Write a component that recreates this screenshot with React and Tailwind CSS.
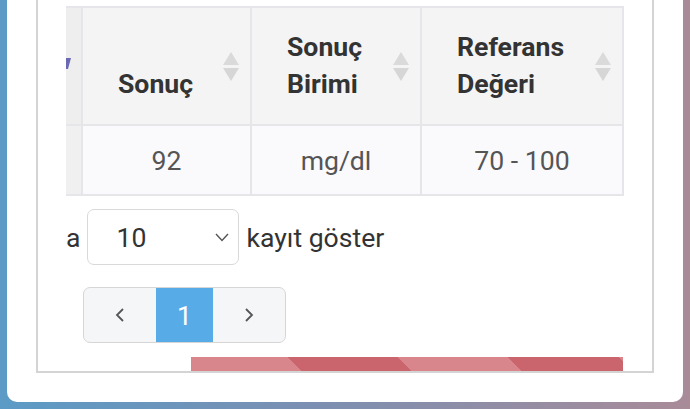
import React from 'react';

const SortIcon = () => (
  <svg width="16" height="29" viewBox="0 0 16 29" className="shrink-0">
    <polygon points="8,0 16,13 0,13" fill="#dadada" />
    <polygon points="0,16 16,16 8,29" fill="#d6d6d6" />
  </svg>
);

const HeadCell = ({ lines }) => (
  <div className="flex justify-between bg-[#f4f4f4] pl-[35px] pr-[11px]">
    <div className="self-end pb-[22px] font-bold text-[#333]">
      {lines.map((l) => (
        <div key={l}>{l}</div>
      ))}
    </div>
    <div className="self-center">
      <SortIcon />
    </div>
  </div>
);

const BodyCell = ({ children }) => (
  <div className="flex items-center justify-center bg-[#fafafc] text-[#555]">{children}</div>
);

const App = () => {
  return (
    <div
      className="w-[690px] h-[409px] overflow-hidden bg-[linear-gradient(90deg,#5b9bc6,#7b8fb2_45%,#a98b98)] text-[26.6px] leading-[37px]"
      style={{ fontFamily: 'Roboto, "Liberation Sans", sans-serif' }}
    >
      <div className="ml-[7px] w-[676px] h-[402px] bg-white rounded-b-[10px] px-[29px] pb-[29px]">
        <div className="h-full border-x-2 border-b-2 border-[#d4d4d4] pl-[28px] pr-[28px] pt-[6px] flex flex-col">
          {/* Table */}
          <div className="grid grid-cols-[15px_167px_168px_200px] grid-rows-[116px_68px] gap-[2px] bg-[#e6e6ea] border-t-2 border-r-2 border-b-2 border-[#e6e6ea] w-[558px]">
            <div className="bg-[#eeeeee] pt-[50px]">
              <svg width="5" height="11" viewBox="0 0 5 11">
                <polygon points="0,0 5,0 2,11 0,11" fill="#6a6ab4" />
              </svg>
            </div>
            <HeadCell lines={['Sonuç']} />
            <HeadCell lines={['Sonuç', 'Birimi']} />
            <HeadCell lines={['Referans', 'Değeri']} />
            <div className="bg-[#f0f0f0]" />
            <BodyCell>92</BodyCell>
            <BodyCell>mg/dl</BodyCell>
            <BodyCell>70 - 100</BodyCell>
          </div>

          {/* Length menu */}
          <div className="mt-[13px] flex items-center gap-[7px] text-[#333]">
            <span>a</span>
            <div className="w-[152px] h-[56px] rounded-[7px] border border-[#d9d9d9] flex items-center justify-between pl-[28px] pr-[9px]">
              <span className="text-[#333]">10</span>
              <svg width="14" height="9" viewBox="0 0 14 9">
                <polyline points="1,1 7,7.5 13,1" fill="none" stroke="#555" strokeWidth="1.4" />
              </svg>
            </div>
            <span>kayıt göster</span>
          </div>

          {/* Pagination */}
          <div className="mt-[22px] ml-[17px] flex w-[203px] h-[56px] rounded-[7px] border border-[#d6d6d6] bg-[#f5f6f8] overflow-hidden">
            <div className="w-[72px] flex items-center justify-center">
              <svg width="10" height="14" viewBox="0 0 10 14">
                <polyline points="8,1 2,7 8,13" fill="none" stroke="#555" strokeWidth="1.8" />
              </svg>
            </div>
            <div className="w-[57px] bg-[#57ace8] text-white flex items-center justify-center">1</div>
            <div className="flex-1 flex items-center justify-center">
              <svg width="10" height="14" viewBox="0 0 10 14">
                <polyline points="2,1 8,7 2,13" fill="none" stroke="#555" strokeWidth="1.8" />
              </svg>
            </div>
          </div>

          {/* Striped progress bar */}
          <div className="mt-auto ml-[125px] w-[432px] h-[14px] bg-[repeating-linear-gradient(45deg,#d8868c_0px,#d8868c_78px,#ca656d_78px,#ca656d_156px)]" />
        </div>
      </div>
    </div>
  );
};

export default App;
